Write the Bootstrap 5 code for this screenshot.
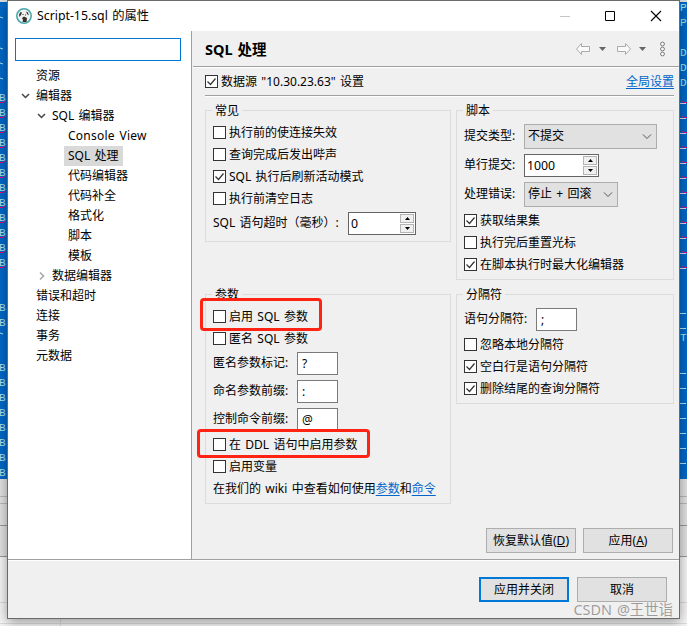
<!DOCTYPE html>
<html lang="zh-CN">
<head>
<meta charset="utf-8">
<title>Script-15.sql 的属性</title>
<meta name="viewport" content="width=device-width, initial-scale=1">
<link href="https://cdn.jsdelivr.net/npm/bootstrap@5.3.0/dist/css/bootstrap.min.css" rel="stylesheet">
<style>
html,body{height:626px;overflow:hidden}
body{font-family:"Noto Sans","Noto Sans CJK SC",sans-serif;font-size:12px;line-height:20px;color:#000;background:#f4f4f4;position:relative;white-space:nowrap;word-spacing:1.2px}
a,a:hover{color:#0066cc;text-decoration:underline;text-underline-offset:2px}
.backdrop{position:absolute;inset:0;width:687px;height:626px}
.backdrop text{font:11px "Liberation Mono",monospace;fill:#b4e4ea}
.dlg{position:relative;width:673px;height:619px;margin-left:7px;border:1px solid #6a6a6a;background:#f0f0f0;box-shadow:0 3px 12px rgba(0,0,0,.4)}
.titlebar{height:30px;padding:0 16px 0 8px;font-size:12.3px}
.titlebar span{margin-left:5px}
.body-area{height:529px;border-bottom:1px solid #a0a0a0;box-shadow:0 1px #fff}
.side{width:184px;border-right:1px solid #a0a0a0;padding:7px 10px 0 7px}
.filter{height:23px;width:166px;border:1px solid #0078d7;border-radius:0;padding:0;margin-bottom:5px}
.tree li{height:20px;display:flex;align-items:center}
.tree svg{margin-right:5px}
.d1{padding-left:21px}.t1{padding-left:5px}.t2{padding-left:21px}.d3{padding-left:53px}
.tree .on{background:#d9d9d9;margin-left:-4px;padding:0 4px;width:59px}
.cv{letter-spacing:.25px}
.pane{margin-left:1px;width:486px}
.head{height:36px;border-bottom:1px solid #a0a0a0;box-shadow:0 1px #fff;padding:0 12px 0 12px}
.head h1{font-size:14.5px;font-weight:700;margin:0;line-height:20px}
.source{height:28px;margin:1px 5px 0 12px;border-bottom:1px solid #a0a0a0;box-shadow:0 1px #fff}
.groups{padding:14px 5px 0 12px;gap:5px}
.grp{border:1px solid #dcdcdc;padding:10px 0 0 7px;position:relative}
.grp>.cap{position:absolute;top:-10px;left:6px;background:#f0f0f0;padding:0 3px;line-height:20px}
.g1{height:132px;width:246px}.g2{height:170px;width:218px}
.g3{height:210px;width:246px;margin-top:52px}.g4{height:110px;width:218px;margin-top:14px}
.ck{height:22px;display:flex;align-items:center;gap:3px}
.grp .ck{padding-top:2px}
.grp .ck i{margin-bottom:2px}
.ck i{width:13px;height:13px;border:1px solid #333;background:#fff;display:block;flex:none}
.ck svg{display:block}
.fld{display:flex;align-items:center;height:28px}
.ent{height:23px;border:1px solid #7a7a7a;background:#fff;line-height:21px;padding-left:4px;width:41px}
.spin{display:flex;justify-content:space-between;border-color:#646464;padding:0 0 0 2px;font-size:12.3px}
.arrows{padding:1px;width:16px}
.arrows b{display:flex;height:9px;width:14px;border:1px solid #b4b4b4;background:#f0f0f0;align-items:center;justify-content:center}
.arrows b+b{margin-top:1px}
.cmb{height:25px;border:1px solid #adadad;background:#e1e1e1;padding:0 4px 0 3px;display:flex;align-items:center;justify-content:space-between}
.dbtn{height:25px;width:90px;border:1px solid #adadad;border-radius:0;background:#e1e1e1;padding:0;font-size:12px;line-height:23px;color:#000}
.dbtn.main{border:2px solid #0078d7;line-height:21px}
.acts{gap:7px;padding-right:6px}
.foot{padding:17px 12px 0 0;gap:8px}
.hl{position:absolute;border:3px solid #ff2314;border-radius:4px}
.wm{position:absolute;right:14px;top:600px;font-size:14.4px;line-height:20px;color:#9c9c9c;text-shadow:0 0 1px #fff}
</style>
</head>
<body>
<svg class="backdrop" id="bg"></svg>
<div class="dlg">
  <div class="titlebar bg-white d-flex align-items-center">
    <svg width="16" height="16" viewBox="0 0 16 16"><circle cx="8" cy="8" r="7.2" fill="#eef3f2" stroke="#4aa9ad" stroke-width="1.6"/><path d="M3 6.500L4.500 4l1.500.5L5 7 3.500 9zM10 3.500l2 1 .8 3L11 6zM6.500 6h1v1h-1zM9 6.500h1v1H9zM6 10l2-1.500L11 10l-.5 4h-4L7 12z" fill="#3a2f2c"/></svg>
    <span class="flex-grow-1">Script-15.sql 的属性</span>
    <svg width="112" height="14" viewBox="0 0 112 14"><path d="M9 7.5h10" stroke="#c4c4c4"/><path d="M54.500 2.500h9v9h-9z" fill="none" stroke="#000"/><path d="M100 2l10 10M110 2L100 12" stroke="#000" stroke-width="1.1"/></svg>
  </div>
  <div class="body-area d-flex">
    <div class="side bg-white">
      <input class="form-control filter" aria-label="filter">
      <ul class="tree list-unstyled m-0">
        <li class="d1">资源</li>
        <li class="t1"><svg width="11" height="8"><path d="M2 2l3.500 3.500L9 2" fill="none" stroke="#444" stroke-width="1.5"/></svg>编辑器</li>
        <li class="t2"><svg width="11" height="8"><path d="M2 2l3.500 3.500L9 2" fill="none" stroke="#444" stroke-width="1.5"/></svg>SQL 编辑器</li>
        <li class="d3"><span class="cv">Console View</span></li>
        <li class="d3"><span class="on">SQL 处理</span></li>
        <li class="d3">代码编辑器</li><li class="d3">代码补全</li><li class="d3">格式化</li><li class="d3">脚本</li><li class="d3">模板</li>
        <li class="t2"><svg width="11" height="10"><path d="M4 1.500l3.500 3.500L4 8.500" fill="none" stroke="#a6a6a6" stroke-width="1.5"/></svg>数据编辑器</li>
        <li class="d1">错误和超时</li><li class="d1">连接</li><li class="d1">事务</li><li class="d1">元数据</li>
      </ul>
    </div>
    <div class="pane">
      <div class="head d-flex align-items-center justify-content-between">
        <h1>SQL 处理</h1>
        <svg width="92" height="16" viewBox="0 0 92 16"><g fill="#fafafa" stroke="#aaa" stroke-linejoin="round"><path d="M1.500 8l5-5.500V5.500h8v5h-8v3z"/><path d="M55.500 8l-5-5.500V5.500h-8v5h8v3z"/></g><path d="M24 6h7l-3.500 4zM64 6h7l-3.500 4z" fill="#666"/><g fill="#fff" stroke="#777"><circle cx="87.500" cy="3" r="1.900"/><circle cx="87.500" cy="8" r="1.900"/><circle cx="87.500" cy="13" r="1.900"/></g></svg>
      </div>
      <div class="source d-flex align-items-center justify-content-between">
        <div class="ck"><i data-on></i><span>数据源 "10.30.23.63" 设置</span></div><a href="#">全局设置</a>
      </div>
      <div class="groups d-flex">
        <div>
          <div class="grp g1"><span class="cap">常见</span>
            <div class="ck"><i></i>执行前的使连接失效</div>
            <div class="ck"><i></i>查询完成后发出哔声</div>
            <div class="ck"><i data-on></i>SQL 执行后刷新活动模式</div>
            <div class="ck"><i></i>执行前清空日志</div>
            <div class="fld"><span style="width:135px">SQL 语句超时（毫秒）:</span><div class="ent spin" style="width:68px">0<span class="arrows"></span></div></div>
          </div>
          <div class="grp g3"><span class="cap">参数</span>
            <div class="ck"><i></i>启用 SQL 参数</div>
            <div class="ck"><i></i>匿名 SQL 参数</div>
            <div class="fld"><span style="width:84px">匿名参数标记:</span><div class="ent">?</div></div>
            <div class="fld"><span style="width:84px">命名参数前缀:</span><div class="ent">:</div></div>
            <div class="fld"><span style="width:84px">控制命令前缀:</span><div class="ent">@</div></div>
            <div class="ck"><i></i>在 DDL 语句中启用参数</div>
            <div class="ck"><i></i>启用变量</div>
            <div class="ck"><span>在我们的 wiki 中查看如何使用<a href="#">参数</a>和<a href="#">命令</a></span></div>
          </div>
        </div>
        <div>
          <div class="grp g2"><span class="cap">脚本</span>
            <div class="fld" style="height:30px"><span style="width:60px">提交类型:</span><div class="cmb" style="width:133px">不提交<svg width="10" height="7"><path d="M1 1.500l4 4 4-4" fill="none" stroke="#555"/></svg></div></div>
            <div class="fld"><span style="width:60px">单行提交:</span><div class="ent spin" style="width:75px">1000<span class="arrows"></span></div></div>
            <div class="fld" style="height:30px"><span style="width:60px">处理错误:</span><div class="cmb" style="width:94px">停止 + 回滚<svg width="10" height="7"><path d="M1 1.500l4 4 4-4" fill="none" stroke="#555"/></svg></div></div>
            <div class="ck"><i data-on></i>获取结果集</div>
            <div class="ck"><i></i>执行完后重置光标</div>
            <div class="ck"><i data-on></i>在脚本执行时最大化编辑器</div>
          </div>
          <div class="grp g4"><span class="cap">分隔符</span>
            <div class="fld"><span style="width:72px">语句分隔符:</span><div class="ent">;</div></div>
            <div class="ck"><i></i>忽略本地分隔符</div>
            <div class="ck"><i data-on></i>空白行是语句分隔符</div>
            <div class="ck"><i data-on></i>删除结尾的查询分隔符</div>
          </div>
        </div>
      </div>
      <div class="acts d-flex justify-content-end mt-4"><button class="btn dbtn">恢复默认值(<u>D</u>)</button><button class="btn dbtn">应用(<u>A</u>)</button></div>
    </div>
  </div>
  <div class="foot d-flex justify-content-end"><button class="btn dbtn main">应用并关闭</button><button class="btn dbtn">取消</button></div>
</div>
<div class="hl" style="left:200px;top:298px;width:122px;height:33px"></div>
<div class="hl" style="left:197px;top:429px;width:173px;height:29px"></div>
<div class="wm">CSDN @王世诣</div>
<script src="https://cdn.jsdelivr.net/npm/bootstrap@5.3.0/dist/js/bootstrap.bundle.min.js"></script>
<script>
document.querySelectorAll('i[data-on]').forEach(e=>{e.innerHTML='<svg width="11" height="11"><path d="M1.500 5.500l3 3 5-6" fill="none" stroke="#333" stroke-width="1.200"/></svg>'});
document.querySelectorAll('.arrows').forEach(e=>{e.innerHTML='<b><svg width="5" height="3"><path d="M0 3L2.500 0L5 3z"/></svg></b><b><svg width="5" height="3"><path d="M0 0L2.500 3L5 0z"/></svg></b>'});
// Editor window behind the dialog: selected SQL text, then the result panel
let s='<rect width="687" height="480" fill="#0069c9"/><path d="M0 1H687" stroke="#ddd" stroke-width="2"/><rect y="479" width="687" height="77" fill="#e4e4e4"/><rect y="556" width="687" height="70" fill="#f7f7f7"/>';
for(const y of [496,503])s+=`<path d="M0 ${y}.500H687" stroke="#bbb"/>`;
for(const y of [525,556])s+=`<path d="M0 ${y}.500H687" stroke="#999"/>`;
s+='<path d="M0 602.500H687M0 623.500H687M60.500 619V626" stroke="#ddd"/>';
const wave=(x,y)=>`<path d="M${x} ${y}l1.500-1.500 1.500 1.500 1.500-1.500 1.500 1.500" fill="none" stroke="#e5007a"/>`;
for(const y of [17,48,63,78,333])s+=`<path d="M0 ${y}l3 1" stroke="#b4e4ea"/>`;
for(let y=97;y<=472;y+=15){
  if((y>262&&y<307)||(y>322&&y<367))continue;
  s+=`<text x="-1" y="${y+4}">B</text>`;
  if(y<=262)s+=wave(0,y+6);
}
for(const [y,t] of [[11,'P'],[26,'P'],[56,'D'],[71,'D'],[86,'D'],[341,'T']])s+=`<text x="680" y="${y}">${t}</text>`;
for(let y=103;y<=268;y+=15)s+=wave(681,y)+`<path d="M680 ${y+.5}h6" stroke="#e8d8e8"/>`;
for(const y of [313,328,373,388,403,418,433,448,463])s+=`<path d="M680 ${y}.500h6" stroke="#b4e4ea"/>`;
document.getElementById('bg').innerHTML=s;
</script>
</body>
</html>
